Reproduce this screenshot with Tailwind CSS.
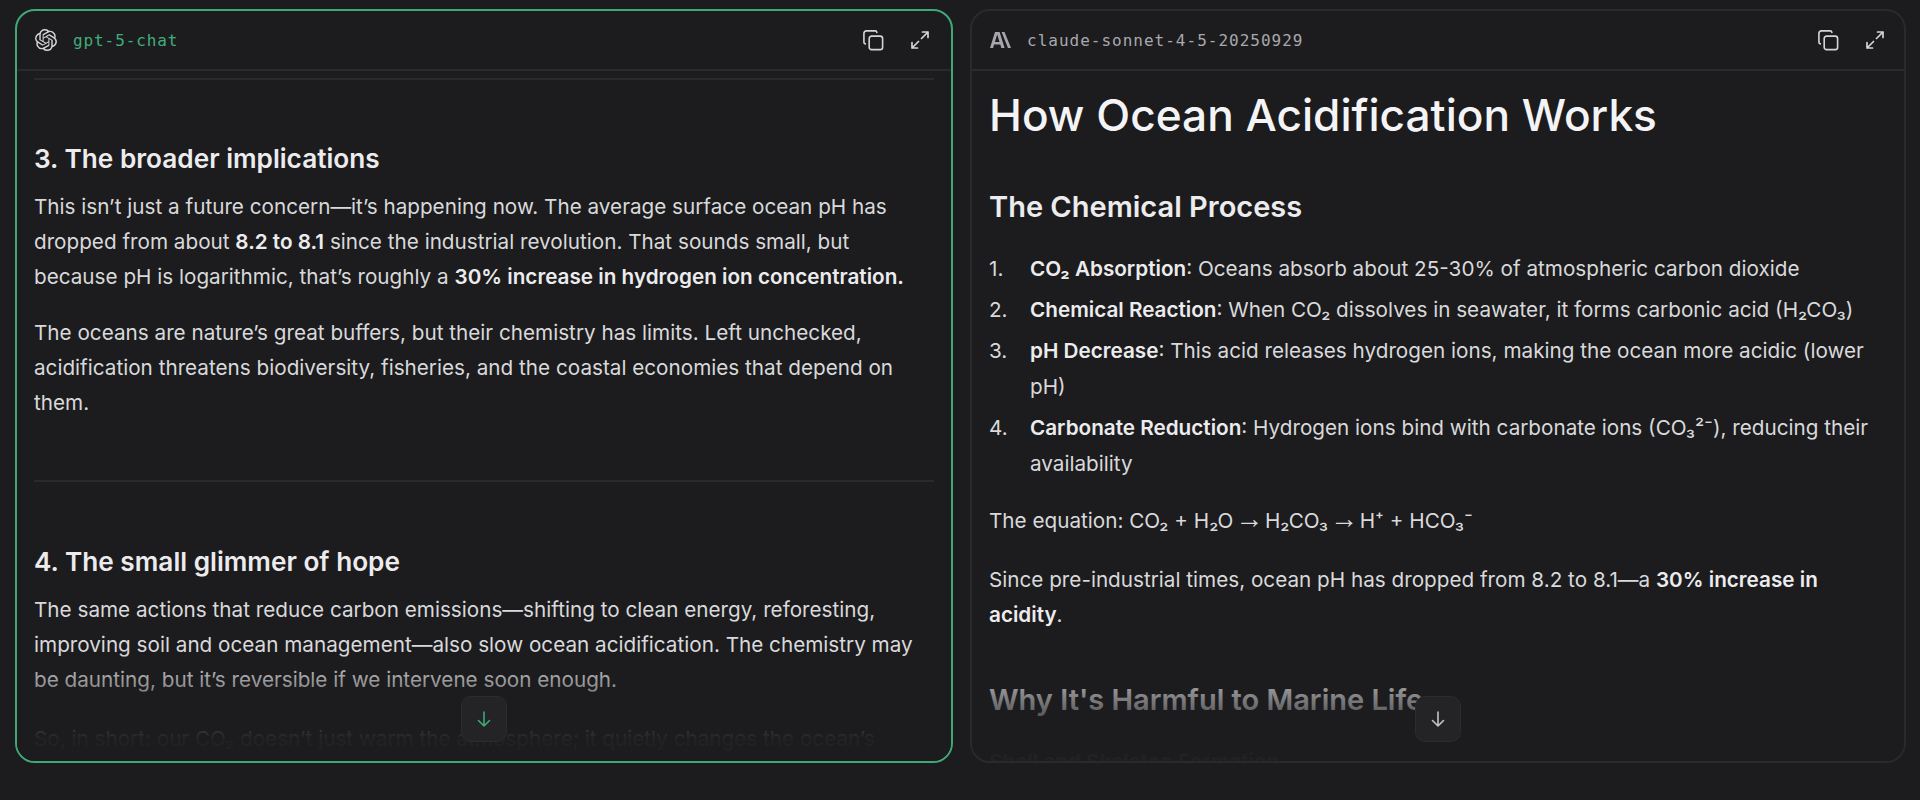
<!DOCTYPE html>
<html lang="en">
  <head>
    <meta charset="UTF-8" />
    <title>Model comparison</title>
    <script src="https://cdn.jsdelivr.net/npm/@tailwindcss/browser@4"></script>
  </head>
  <body class="bg-[#1c1c1e] font-['Inter',sans-serif]">
    <div class="flex h-[800px] gap-[17px] overflow-hidden pt-[9px] pr-[14px] pb-[37px] pl-[15px]">
      <!-- left panel -->
      <section class="relative flex w-[938px] flex-col overflow-hidden rounded-[20px] border-2 border-[#3fa877]">
        <header class="flex h-[60px] shrink-0 items-center justify-between border-b-2 border-[#2a2a2c] pr-[22px] pl-[18px]">
          <div class="flex items-center gap-[16px]">
            <svg class="h-[22px] w-[22px] text-[#d4d4d6]" viewBox="0 0 24 24" fill="currentColor"><path d="M22.2819 9.8211a5.9847 5.9847 0 0 0-.5157-4.9108 6.0462 6.0462 0 0 0-6.5098-2.9A6.0651 6.0651 0 0 0 4.9807 4.1818a5.9847 5.9847 0 0 0-3.9977 2.9 6.0462 6.0462 0 0 0 .7427 7.0966 5.98 5.98 0 0 0 .511 4.9107 6.051 6.051 0 0 0 6.5146 2.9001A5.9847 5.9847 0 0 0 13.2599 24a6.0557 6.0557 0 0 0 5.7718-4.2058 5.9894 5.9894 0 0 0 3.9977-2.9001 6.0557 6.0557 0 0 0-.7475-7.0729zm-9.022 12.6081a4.4755 4.4755 0 0 1-2.8764-1.0408l.1419-.0804 4.7783-2.7582a.7948.7948 0 0 0 .3927-.6813v-6.7369l2.02 1.1686a.071.071 0 0 1 .038.052v5.5826a4.504 4.504 0 0 1-4.4945 4.4944zm-9.6607-4.1254a4.4708 4.4708 0 0 1-.5346-3.0137l.142.0852 4.783 2.7582a.7712.7712 0 0 0 .7806 0l5.8428-3.3685v2.3324a.0804.0804 0 0 1-.0332.0615L9.74 19.9502a4.4992 4.4992 0 0 1-6.1408-1.6464zM2.3408 7.8956a4.485 4.485 0 0 1 2.3655-1.9728V11.6a.7664.7664 0 0 0 .3879.6765l5.8144 3.3543-2.0201 1.1685a.0757.0757 0 0 1-.071 0l-4.8303-2.7865A4.504 4.504 0 0 1 2.3408 7.872zm16.5963 3.8558L13.1038 8.364 15.1192 7.2a.0757.0757 0 0 1 .071 0l4.8303 2.7913a4.4944 4.4944 0 0 1-.6765 8.1042v-5.6772a.79.79 0 0 0-.407-.667zm2.0107-3.0231l-.142-.0852-4.7735-2.7818a.7759.7759 0 0 0-.7854 0L9.409 9.2297V6.8974a.0662.0662 0 0 1 .0284-.0615l4.8303-2.7866a4.4992 4.4992 0 0 1 6.6802 4.66zM8.3065 12.863l-2.02-1.1638a.0804.0804 0 0 1-.038-.0567V6.0742a4.4992 4.4992 0 0 1 7.3757-3.4537l-.142.0805L8.704 5.459a.7948.7948 0 0 0-.3927.6813zm1.0976-2.3654l2.602-1.4998 2.6069 1.4998v2.9994l-2.5974 1.4997-2.6067-1.4997Z"/></svg>
            <span class="mt-[1px] font-['DejaVu_Sans_Mono',monospace] text-[16px] tracking-[0.9px] text-[#3fae7c]">gpt-5-chat</span>
          </div>
          <div class="flex items-center gap-[26px] text-[#d4d4d6]">
            <svg class="h-[23px] w-[23px]" viewBox="0 0 24 24" fill="none" stroke="currentColor" stroke-width="1.7" stroke-linecap="round" stroke-linejoin="round"><rect x="7.5" y="7.5" width="14" height="14" rx="2.5"/><path d="M3.5 15.5A1.8 1.8 0 0 1 2 13.8V4.5A2.5 2.5 0 0 1 4.5 2h9.3a1.8 1.8 0 0 1 1.7 1.5"/></svg>
            <svg class="h-[18px] w-[18px]" viewBox="0 0 18 18" fill="none" stroke="currentColor" stroke-width="1.7" stroke-linecap="round" stroke-linejoin="round"><path d="M11.5 1h5.5v5.5M17 1l-6.5 6.5M6.5 17H1v-5.5M1 17l6.5-6.5"/></svg>
          </div>
        </header>
        <div class="min-h-0 flex-1 overflow-hidden px-[17px] pt-[7px] text-[20.7px] leading-[35px] text-[#d9d9db]">
          <hr class="border-t-2 border-[#2a2a2c]" />
          <h3 class="mt-[61px] text-[26.2px] leading-[36px] font-semibold text-[#ececee]">3. The broader implications</h3>
          <p class="mt-[12px]">This isn’t just a future concern—it’s happening now. The average surface ocean pH has dropped from about <strong class="font-semibold text-[#ececee]">8.2 to 8.1</strong> since the industrial revolution. That sounds small, but because pH is logarithmic, that’s roughly a <strong class="font-semibold text-[#ececee]">30% increase in hydrogen ion concentration.</strong></p>
          <p class="mt-[21px]">The oceans are nature’s great buffers, but their chemistry has limits. Left unchecked, acidification threatens biodiversity, fisheries, and the coastal economies that depend on them.</p>
          <hr class="mt-[60px] border-t-2 border-[#2a2a2c]" />
          <h3 class="mt-[62px] text-[26.2px] leading-[36px] font-semibold text-[#ececee]">4. The small glimmer of hope</h3>
          <p class="mt-[12px]">The same actions that reduce carbon emissions—shifting to clean energy, reforesting, improving soil and ocean management—also slow ocean acidification. The chemistry may be daunting, but it’s reversible if we intervene soon enough.</p>
          <p class="mt-[24px]">So, in short: our CO₂ doesn’t just warm the atmosphere; it quietly changes the ocean’s</p>
        </div>
        <div class="pointer-events-none absolute right-0 bottom-0 left-0 h-[110px] bg-gradient-to-b from-[#1c1c1e]/0 to-[#1c1c1e]/97 to-80%"></div>
        <button class="absolute bottom-[19px] left-1/2 flex h-[46px] w-[46px] -translate-x-1/2 items-center justify-center rounded-[10px] border border-[#2c2c2e] bg-[#242426] text-[#3fa877]">
          <svg class="h-[20px] w-[20px]" viewBox="0 0 20 20" fill="none" stroke="currentColor" stroke-width="1.6" stroke-linecap="round" stroke-linejoin="round"><path d="M10 3v14M4.5 11.5 10 17l5.5-5.5"/></svg>
        </button>
      </section>

      <!-- right panel -->
      <section class="relative flex w-[936px] flex-col overflow-hidden rounded-[20px] border-2 border-[#2a2a2c]">
        <header class="flex h-[60px] shrink-0 items-center justify-between border-b-2 border-[#2a2a2c] pr-[20px] pl-[18px]">
          <div class="flex items-center gap-[16px]">
            <svg class="h-[16px] w-[21px] text-[#a6a6ac]" viewBox="0 0 21 16" fill="currentColor"><path fill-rule="evenodd" d="M0 16 5 0h4.6l5 16h-3.3l-1-3.4H4.1L3.1 16ZM4.9 10h4.6L7.2 2.6Z"/><path d="M11.6 0h2.9L21 16h-3Z"/></svg>
            <span class="mt-[1px] font-['DejaVu_Sans_Mono',monospace] text-[16px] tracking-[1px] text-[#a8a8ae]">claude-sonnet-4-5-20250929</span>
          </div>
          <div class="flex items-center gap-[26px] text-[#d4d4d6]">
            <svg class="h-[23px] w-[23px]" viewBox="0 0 24 24" fill="none" stroke="currentColor" stroke-width="1.7" stroke-linecap="round" stroke-linejoin="round"><rect x="7.5" y="7.5" width="14" height="14" rx="2.5"/><path d="M3.5 15.5A1.8 1.8 0 0 1 2 13.8V4.5A2.5 2.5 0 0 1 4.5 2h9.3a1.8 1.8 0 0 1 1.7 1.5"/></svg>
            <svg class="h-[18px] w-[18px]" viewBox="0 0 18 18" fill="none" stroke="currentColor" stroke-width="1.7" stroke-linecap="round" stroke-linejoin="round"><path d="M11.5 1h5.5v5.5M17 1l-6.5 6.5M6.5 17H1v-5.5M1 17l6.5-6.5"/></svg>
          </div>
        </header>
        <div class="min-h-0 flex-1 overflow-hidden px-[17px] pt-[14px] text-[20.7px] leading-[36px] text-[#d9d9db]">
          <h1 class="text-[44.2px] leading-[60px] font-[550] text-[#f4f4f6]">How Ocean Acidification Works</h1>
          <h2 class="mt-[42px] text-[29px] leading-[40px] font-semibold text-[#ececee]">The Chemical Process</h2>
          <ol class="mt-[24px] flex flex-col gap-[5px]">
            <li class="flex"><span class="w-[41px] shrink-0">1.</span><span><strong class="font-semibold text-[#ececee]">CO₂ Absorption</strong>: Oceans absorb about 25-30% of atmospheric carbon dioxide</span></li>
            <li class="flex"><span class="w-[41px] shrink-0">2.</span><span><strong class="font-semibold text-[#ececee]">Chemical Reaction</strong>: When CO₂ dissolves in seawater, it forms carbonic acid (H₂CO₃)</span></li>
            <li class="flex"><span class="w-[41px] shrink-0">3.</span><span><strong class="font-semibold text-[#ececee]">pH Decrease</strong>: This acid releases hydrogen ions, making the ocean more acidic (lower pH)</span></li>
            <li class="flex"><span class="w-[41px] shrink-0">4.</span><span><strong class="font-semibold text-[#ececee]">Carbonate Reduction</strong>: Hydrogen ions bind with carbonate ions (CO₃²⁻), reducing their availability</span></li>
          </ol>
          <p class="mt-[21px]">The equation: CO₂ + H₂O <span class="-mx-[4px] font-['Liberation_Sans',sans-serif] text-[28px] leading-none">→</span> H₂CO₃ <span class="-mx-[4px] font-['Liberation_Sans',sans-serif] text-[28px] leading-none">→</span> H⁺ + HCO₃⁻</p>
          <p class="mt-[23px] leading-[35px]">Since pre-industrial times, ocean pH has dropped from 8.2 to 8.1—a <strong class="font-semibold text-[#ececee]">30% increase in acidity</strong>.</p>
          <h2 class="mt-[48px] text-[29px] leading-[40px] font-semibold text-[#ececee]">Why It's Harmful to Marine Life</h2>
          <p class="mt-[24px] font-semibold">Shell and Skeleton Formation</p>
        </div>
        <div class="pointer-events-none absolute right-0 bottom-0 left-0 h-[110px] bg-gradient-to-b from-[#1c1c1e]/0 to-[#1c1c1e]/97 to-80%"></div>
        <button class="absolute bottom-[19px] left-1/2 flex h-[46px] w-[46px] -translate-x-1/2 items-center justify-center rounded-[10px] border border-[#2c2c2e] bg-[#242426] text-[#c4c4c8]">
          <svg class="h-[20px] w-[20px]" viewBox="0 0 20 20" fill="none" stroke="currentColor" stroke-width="1.6" stroke-linecap="round" stroke-linejoin="round"><path d="M10 3v14M4.5 11.5 10 17l5.5-5.5"/></svg>
        </button>
      </section>
    </div>
  </body>
</html>
